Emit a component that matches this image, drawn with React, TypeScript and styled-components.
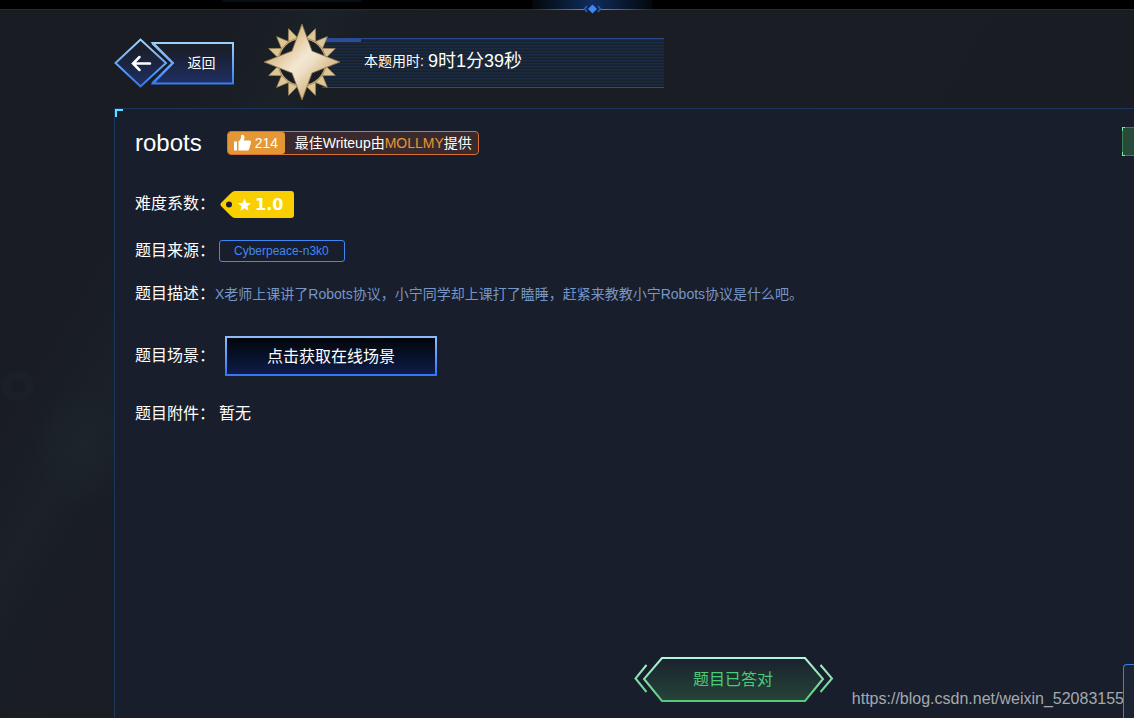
import React from "react";
import styled, { createGlobalStyle } from "styled-components";

const GlobalStyle = createGlobalStyle`
  * { box-sizing: border-box; }
  body {
    margin: 0;
    background: #191c23;
    color: #fff;
    font-family: "Liberation Sans", "Noto Sans CJK SC", sans-serif;
    font-size: 16px;
    line-height: 24px;
  }
  button { font-family: inherit; color: inherit; cursor: pointer; }
`;

const Page = styled.div`
  position: relative;
  display: flex;
  flex-direction: column;
  min-height: 100vh;
  overflow: hidden;
  background:
    radial-gradient(ellipse 18px 16px at 18px 386px, transparent 38%, #1a2027 44%, #1a2027 85%, transparent),
    radial-gradient(ellipse 50px 60px at 84px 446px, #1c252b, transparent),
    linear-gradient(120deg, #191c23 0, #191c23 210px, #1a2127 290px, #191e24 330px, #1b1d24 400px, #191c23 100%);
`;

const TopBar = styled.div`
  position: relative;
  display: flex;
  justify-content: center;
  height: 10px;
  padding-left: 50px;
  background: #000;
  border-bottom: 1px solid #1b2c4e;
`;

const TopTab = styled.div`
  position: absolute;
  top: 0;
  left: 222px;
  width: 140px;
  height: 2px;
  background: #090d18;
  border-radius: 0 0 8px 8px;
`;

const TopGlow = styled.div`
  position: relative;
  width: 120px;
  height: 9px;
  background: linear-gradient(90deg, #03080b, #102c5c 50%, #03080b);
`;

const TopMarker = styled.svg`
  position: absolute;
  top: 4px;
  left: 0;
`;

const Header = styled.header`
  display: flex;
  align-items: center;
  height: 98px;
  padding: 8px 0 0 114px;
`;

const BackButton = styled.button`
  position: relative;
  width: 120px;
  height: 50px;
  padding: 0 0 0 55px;
  border: 0;
  background: none;
  font-size: 14px;
  line-height: 20px;
`;

const Backdrop = styled.svg`
  position: absolute;
  inset: 0;
`;

const ButtonText = styled.span`
  position: relative;
`;

const Timer = styled.div`
  position: relative;
  display: flex;
  align-items: center;
  width: 342px;
  height: 50px;
  margin-left: 88px;
  padding: 0 0 4px 42px;
  font-size: 14px;
  border: solid #294a91;
  border-width: 1px 0;
  background: repeating-linear-gradient(180deg, #1a2b43 0, #1a2b43 1px, #19212d 2px, #19212d 3px);
`;

const TimerAccent = styled.span`
  position: absolute;
  top: 0;
  left: 0;
  width: 39px;
  height: 3px;
  background: #2c4b98;
`;

const Medal = styled.svg`
  position: absolute;
  top: -16px;
  left: -59px;
`;

const TimeValue = styled.span`
  margin-left: 4px;
  font-size: 18px;
`;

const Panel = styled.main`
  position: relative;
  display: flex;
  flex: 1;
  flex-direction: column;
  margin-left: 114px;
  padding-left: 20px;
  border: solid #18365e;
  border-width: 1px 0 0 1px;
  background: #181e2b;
`;

const Corner = styled.span`
  position: absolute;
  top: 0;
  left: 0;
  width: 8px;
  height: 8px;
  border: solid #5fe2ff;
  border-width: 2px 0 0 2px;
`;

const Row = styled.div<{ $height: number; $gap?: number }>`
  display: flex;
  align-items: center;
  min-height: ${(p) => p.$height}px;
  gap: ${(p) => p.$gap ?? 4}px;
`;

const Title = styled.h1`
  margin: 0;
  font-size: 24px;
  font-weight: 400;
`;

const Writeup = styled.div`
  display: flex;
  align-items: center;
  height: 24px;
  padding-right: 6px;
  border: 1px solid #d96f30;
  border-radius: 4px;
  background: #3a2a2d;
  font-size: 14px;
  line-height: 22px;
`;

const Likes = styled.button`
  display: flex;
  align-items: center;
  gap: 3px;
  width: 57px;
  height: 22px;
  margin-right: 10px;
  padding: 0 0 0 5px;
  border: 0;
  border-radius: 3px;
  background: #e69735;
  font-size: 14px;
`;

const Author = styled.a`
  color: #e69735;
  text-decoration: none;
`;

const Label = styled.span`
  width: 80px;
  white-space: nowrap;
`;

const Rating = styled.span`
  position: relative;
  display: flex;
  align-items: center;
  width: 74px;
  height: 27px;
  padding-left: 35px;
  font: bold 16px "DejaVu Sans", sans-serif;
`;

const Source = styled.a`
  height: 22px;
  padding: 0 15px 0 14px;
  border: 1px solid #3f87f7;
  border-radius: 3px;
  color: #3f87f7;
  font-size: 12px;
  line-height: 20px;
  text-decoration: none;
`;

const Description = styled.p`
  margin: 0;
  color: #7696c8;
  font-size: 14px;
`;

const SceneButton = styled.button`
  width: 212px;
  height: 40px;
  padding: 0 0 2px;
  border: 2px solid;
  border-image: linear-gradient(#8cbcff, #3377f5) 1;
  background: linear-gradient(#02060a, #0e1c49);
  font-size: 16px;
`;

const PanelFooter = styled.footer`
  display: flex;
  justify-content: center;
  margin-top: auto;
  padding: 0 0 16px 199px;
`;

const AnswerButton = styled.button`
  position: relative;
  width: 200px;
  height: 46px;
  padding: 0 2px 2px 0;
  border: 0;
  background: none;
  color: #4bca79;
  font-size: 16px;
`;

const SideTab = styled.div`
  position: absolute;
  top: 18px;
  right: 0;
  width: 12px;
  height: 29px;
  border: solid #3d8052;
  border-width: 1px 0 1px 1px;
  background: #284a3a;

  &::before,
  &::after {
    content: "";
    position: absolute;
    left: -1px;
    width: 2px;
    height: 3px;
    border: solid #6cf09a;
  }
  &::before { top: -1px; border-width: 1px 0 0 1px; }
  &::after { bottom: -1px; border-width: 0 0 1px 1px; }
`;

const SideDock = styled.div`
  position: absolute;
  right: 0;
  bottom: 0;
  width: 11px;
  height: 54px;
  border: solid #3f7de8;
  border-width: 1px 0 0 1px;
  border-radius: 4px 0 0 0;
  background: #1c2434;
`;

const Watermark = styled.span`
  position: absolute;
  right: 10px;
  bottom: 7px;
  color: #a5a9af;
  font-size: 16px;
`;

const teeth = [22, 45, 68, 112, 135, 158, 202, 225, 248, 292, 315, 338];

const MedalIcon = () => (
  <Medal width="78" height="78" viewBox="-39 -39 78 78" aria-hidden="true">
    <defs>
      <linearGradient id="gold" x1="0" y1="0" x2="1" y2="1">
        <stop offset="0.2" stopColor="#d3b175" />
        <stop offset="0.48" stopColor="#f3e7d3" />
        <stop offset="0.56" stopColor="#eee0c8" />
        <stop offset="0.8" stopColor="#d0ac6d" />
      </linearGradient>
    </defs>
    <circle r="24" fill="#191d25" stroke="#cfb078" strokeWidth="2" />
    {teeth.map((a) => (
      <path key={a} d="M24 -5L36 0L24 5Z" transform={`rotate(${a})`} fill="#dfc594" stroke="#937c52" strokeWidth="0.6" />
    ))}
    <path d="M0 -38L10 -11L38 0L10 11L0 38L-10 11L-38 0L-10 -11Z" fill="url(#gold)" stroke="#8e754a" strokeWidth="0.8" />
  </Medal>
);

export default function App() {
  return (
    <Page>
      <GlobalStyle />
      <TopBar>
        <TopTab />
        <TopGlow>
          <TopMarker width="120" height="10" viewBox="0 0 120 10" aria-hidden="true">
            <defs>
              <linearGradient id="beam" gradientUnits="userSpaceOnUse" x1="0" y1="0" x2="120" y2="0">
                <stop offset="0" stopColor="#1b2c4e" />
                <stop offset="0.4" stopColor="#3b86f2" />
                <stop offset="0.6" stopColor="#3b86f2" />
                <stop offset="1" stopColor="#1b2c4e" />
              </linearGradient>
            </defs>
            <path d="M0 5.500H52M69 5.500H120" stroke="url(#beam)" />
            <path d="M60.500 0.500L65 5L60.500 9.500L56 5Z" fill="#3d86fb" />
            <path d="M55 2L52.500 5L55 8M66 2L68.500 5L66 8" fill="none" stroke="#2b60b8" strokeWidth="1.500" />
          </TopMarker>
        </TopGlow>
      </TopBar>

      <Header>
        <BackButton type="button">
          <Backdrop width="120" height="50" viewBox="0 0 120 50" aria-hidden="true">
            <defs>
              <linearGradient id="edge" gradientUnits="userSpaceOnUse" x1="0" y1="2" x2="0" y2="48">
                <stop offset="0" stopColor="#a5d5fb" />
                <stop offset="1" stopColor="#3079f4" />
              </linearGradient>
              <linearGradient id="navy" x1="0" y1="0" x2="0" y2="1">
                <stop offset="0.2" stopColor="#1a1f2b" />
                <stop offset="1" stopColor="#1e2f63" />
              </linearGradient>
            </defs>
            <path d="M39 5H119V45.500H39L59 25Z" fill="url(#navy)" stroke="url(#edge)" strokeWidth="2" />
            <path d="M33 5H39L59 25L39 45.500H33L53 25Z" fill="#191c23" />
            <path d="M38 5L58.500 25L38 45.500" fill="none" stroke="url(#edge)" strokeWidth="2" />
            <path d="M1.500 25L26.500 1.500L52 25L26.500 48.500Z" fill="url(#navy)" stroke="url(#edge)" strokeWidth="2" />
            <path d="M36 25.500H19M25.500 19L19 25.500L25.500 32" fill="none" stroke="#fff" strokeWidth="2.500" strokeLinecap="round" />
          </Backdrop>
          <ButtonText>返回</ButtonText>
        </BackButton>
        <Timer>
          <TimerAccent />
          <MedalIcon />
          <span>本题用时:</span>
          <TimeValue>9时1分39秒</TimeValue>
        </Timer>
      </Header>

      <Panel>
        <Corner />
        <Row $height={68} $gap={25}>
          <Title>robots</Title>
          <Writeup>
            <Likes type="button">
              <svg width="19" height="18" viewBox="0 0 19 18" fill="#fff" aria-hidden="true">
                <path d="M1 7.500H4V16.500H1ZM5.500 7.500C7.500 6 8.200 4 8.200 2.200C8.200 0 11.500 0.300 11.500 3.500C11.500 4.800 11 5.700 10.700 6.500H16.500C17.800 6.500 18.300 7.500 18 8.500L16.200 15C15.900 16 15.300 16.500 14.300 16.500H5.500Z" />
              </svg>
              214
            </Likes>
            <span>最佳Writeup由<Author href="#author">MOLLMY</Author>提供</span>
          </Writeup>
        </Row>
        <Row $height={54} $gap={5}>
          <Label>难度系数：</Label>
          <Rating>
            <Backdrop width="74" height="27" viewBox="0 0 74 27" aria-hidden="true">
              <path d="M1 12Q0 13.500 1 15L11 25Q13 27 15 27H71Q74 27 74 24V3Q74 0 71 0H15Q13 0 11 2Z" fill="#facf00" />
              <circle cx="9" cy="13.500" r="3" fill="#181e2b" />
              <path d="M24.500 7.500L26.300 11.800L31 12.200L27.400 15.200L28.500 19.800L24.500 17.300L20.500 19.800L21.600 15.200L18 12.200L22.700 11.800Z" fill="#fff" />
            </Backdrop>
            <ButtonText>1.0</ButtonText>
          </Rating>
        </Row>
        <Row $height={40}>
          <Label>题目来源：</Label>
          <Source href="#source">Cyberpeace-n3k0</Source>
        </Row>
        <Row $height={46} $gap={0}>
          <Label>题目描述：</Label>
          <Description>X老师上课讲了Robots协议，小宁同学却上课打了瞌睡，赶紧来教教小宁Robots协议是什么吧。</Description>
        </Row>
        <Row $height={78} $gap={10}>
          <Label>题目场景：</Label>
          <SceneButton type="button">点击获取在线场景</SceneButton>
        </Row>
        <Row $height={38}>
          <Label>题目附件：</Label>
          <span>暂无</span>
        </Row>
        <SideTab />
        <PanelFooter>
          <AnswerButton type="button">
            <Backdrop width="200" height="46" viewBox="0 0 200 46" aria-hidden="true">
              <defs>
                <linearGradient id="mint" gradientUnits="userSpaceOnUse" x1="0" y1="0" x2="0" y2="46">
                  <stop offset="0" stopColor="#b7f8df" />
                  <stop offset="1" stopColor="#54c779" />
                </linearGradient>
                <linearGradient id="moss" x1="0" y1="0" x2="0" y2="1">
                  <stop offset="0" stopColor="#1a222e" />
                  <stop offset="1" stopColor="#264439" />
                </linearGradient>
              </defs>
              <path d="M28 2H171L189 23L171 45H28L10 23Z" fill="url(#moss)" stroke="url(#mint)" strokeWidth="2" />
              <path d="M12.500 9L1.500 22.500L12.500 36M186.500 9L198 22.500L186.500 36" fill="none" stroke="url(#mint)" strokeWidth="2" />
            </Backdrop>
            <ButtonText>题目已答对</ButtonText>
          </AnswerButton>
        </PanelFooter>
      </Panel>
      <Watermark>https://blog.csdn.net/weixin_52083155</Watermark>
      <SideDock />
    </Page>
  );
}
